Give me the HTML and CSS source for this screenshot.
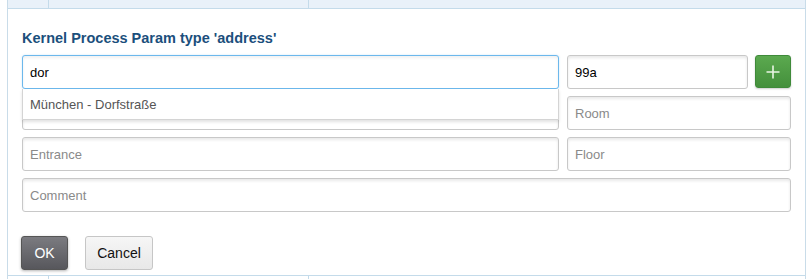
FILE: index.html
```html
<!DOCTYPE html>
<html>
<head>
<meta charset="utf-8">
<link rel="stylesheet" href="styles.css">
</head>
<body>
<div class="table">
  <div class="row-top">
    <div class="cell c1"></div>
    <div class="cell c2"></div>
    <div class="cell c3"></div>
  </div>
  <div class="detail">
    <h3 class="title">Kernel Process Param type 'address'</h3>
    <div class="form">
      <div class="field street">
        <input class="input focus" type="text" value="dor">
        <div class="dropdown">
          <div class="dd-item">München - Dorfstraße</div>
        </div>
      </div>
      <div class="field house">
        <input class="input" type="text" value="99a">
        <button class="btn-add" type="button">
          <svg width="16" height="16" viewBox="0 0 16 16"><path d="M8 1.5v13M1.5 8h13" stroke="#e9f5e4" stroke-width="1.6" fill="none"/></svg>
        </button>
      </div>
      <div class="field"><input class="input" type="text" placeholder=""></div>
      <div class="field"><input class="input" type="text" placeholder="Room"></div>
      <div class="field"><input class="input" type="text" placeholder="Entrance"></div>
      <div class="field"><input class="input" type="text" placeholder="Floor"></div>
      <div class="field full"><input class="input" type="text" placeholder="Comment"></div>
    </div>
    <div class="actions">
      <button class="btn btn-ok" type="button">OK</button>
      <button class="btn btn-cancel" type="button">Cancel</button>
    </div>
  </div>
  <div class="row-bottom">
    <div class="cell c1"></div>
    <div class="cell c2"></div>
    <div class="cell c3"></div>
  </div>
</div>
</body>
</html>
```
FILE: styles.css
```css
html, body {
  margin: 0;
  padding: 0;
  background: #ffffff;
  font-family: "Liberation Sans", Arial, sans-serif;
}
.table {
  margin-left: 7px;
  width: 797px;
  border-left: 1px solid #c9dce9;
  border-right: 1px solid #c9dce9;
  height: 279px;
  display: flex;
  flex-direction: column;
}
.row-top {
  height: 8px;
  background: #e9f1f9;
  border-bottom: 1px solid #c4dbea;
  display: grid;
  grid-template-columns: 40px 260px 1fr;
}
.row-bottom {
  flex: 1;
  border-top: 1px solid #c4dbea;
  display: grid;
  grid-template-columns: 40px 260px 1fr;
}
.cell.c2, .cell.c3 {
  border-left: 1px solid #c4dbea;
}
.detail {
  height: 266px;
  padding: 0 14px;
  box-sizing: border-box;
  background: #ffffff;
}
.title {
  margin: 0;
  padding-top: 21px;
  height: 46px;
  box-sizing: border-box;
  font-size: 14.5px;
  font-weight: bold;
  color: #1b4f7c;
  line-height: 17px;
}
.form {
  display: grid;
  grid-template-columns: 537px 224px;
  column-gap: 8px;
  row-gap: 7px;
}
.field {
  position: relative;
  display: flex;
  gap: 7px;
}
.field.full {
  grid-column: 1 / 3;
}
.input {
  flex: 1;
  min-width: 0;
  height: 34px;
  box-sizing: border-box;
  border: 1px solid #c8c8c8;
  border-radius: 3px;
  padding: 0 7px;
  font-family: "Liberation Sans", Arial, sans-serif;
  font-size: 13px;
  color: #000;
  background: #fff;
  box-shadow: inset 0 2px 3px rgba(0,0,0,0.09);
  outline: none;
}
.input::placeholder {
  color: #8a8a8a;
}
.input.focus {
  border-color: #6cb8ec;
  box-shadow: inset 0 2px 3px rgba(0,0,0,0.06), 0 0 2px rgba(102,175,233,0.35);
}
.dropdown {
  position: absolute;
  left: 0;
  right: 0;
  top: 34px;
  height: 31px;
  box-sizing: border-box;
  background: #fff;
  border: 1px solid #d4d4d4;
  border-top: none;
  box-shadow: 0 2px 3px rgba(0,0,0,0.12);
  z-index: 2;
}
.dd-item {
  padding: 7px 7px 0;
  font-size: 13px;
  line-height: 18px;
  color: #555;
}
.btn-add {
  width: 36px;
  height: 33px;
  flex: none;
  border: 1px solid #3f8a3a;
  border-radius: 3px;
  background: linear-gradient(#5ba94f, #44903c);
  display: flex;
  align-items: center;
  justify-content: center;
  padding: 0;
  box-shadow: 0 1px 2px rgba(0,0,0,0.2);
}
.actions {
  display: flex;
  gap: 17px;
  margin-top: 24px;
  margin-left: -1px;
}
.btn {
  height: 34px;
  box-sizing: border-box;
  border-radius: 3px;
  font-family: "Liberation Sans", Arial, sans-serif;
  font-size: 14px;
  padding: 0;
}
.btn-ok {
  width: 47px;
  color: #fff;
  border: 1px solid #555;
  background: linear-gradient(#7b7b80, #57575c);
  box-shadow: 0 1px 3px rgba(0,0,0,0.3);
}
.btn-cancel {
  width: 68px;
  color: #111;
  border: 1px solid #c6c6c6;
  background: linear-gradient(#f6f6f6, #e8e8e8);
}
```
